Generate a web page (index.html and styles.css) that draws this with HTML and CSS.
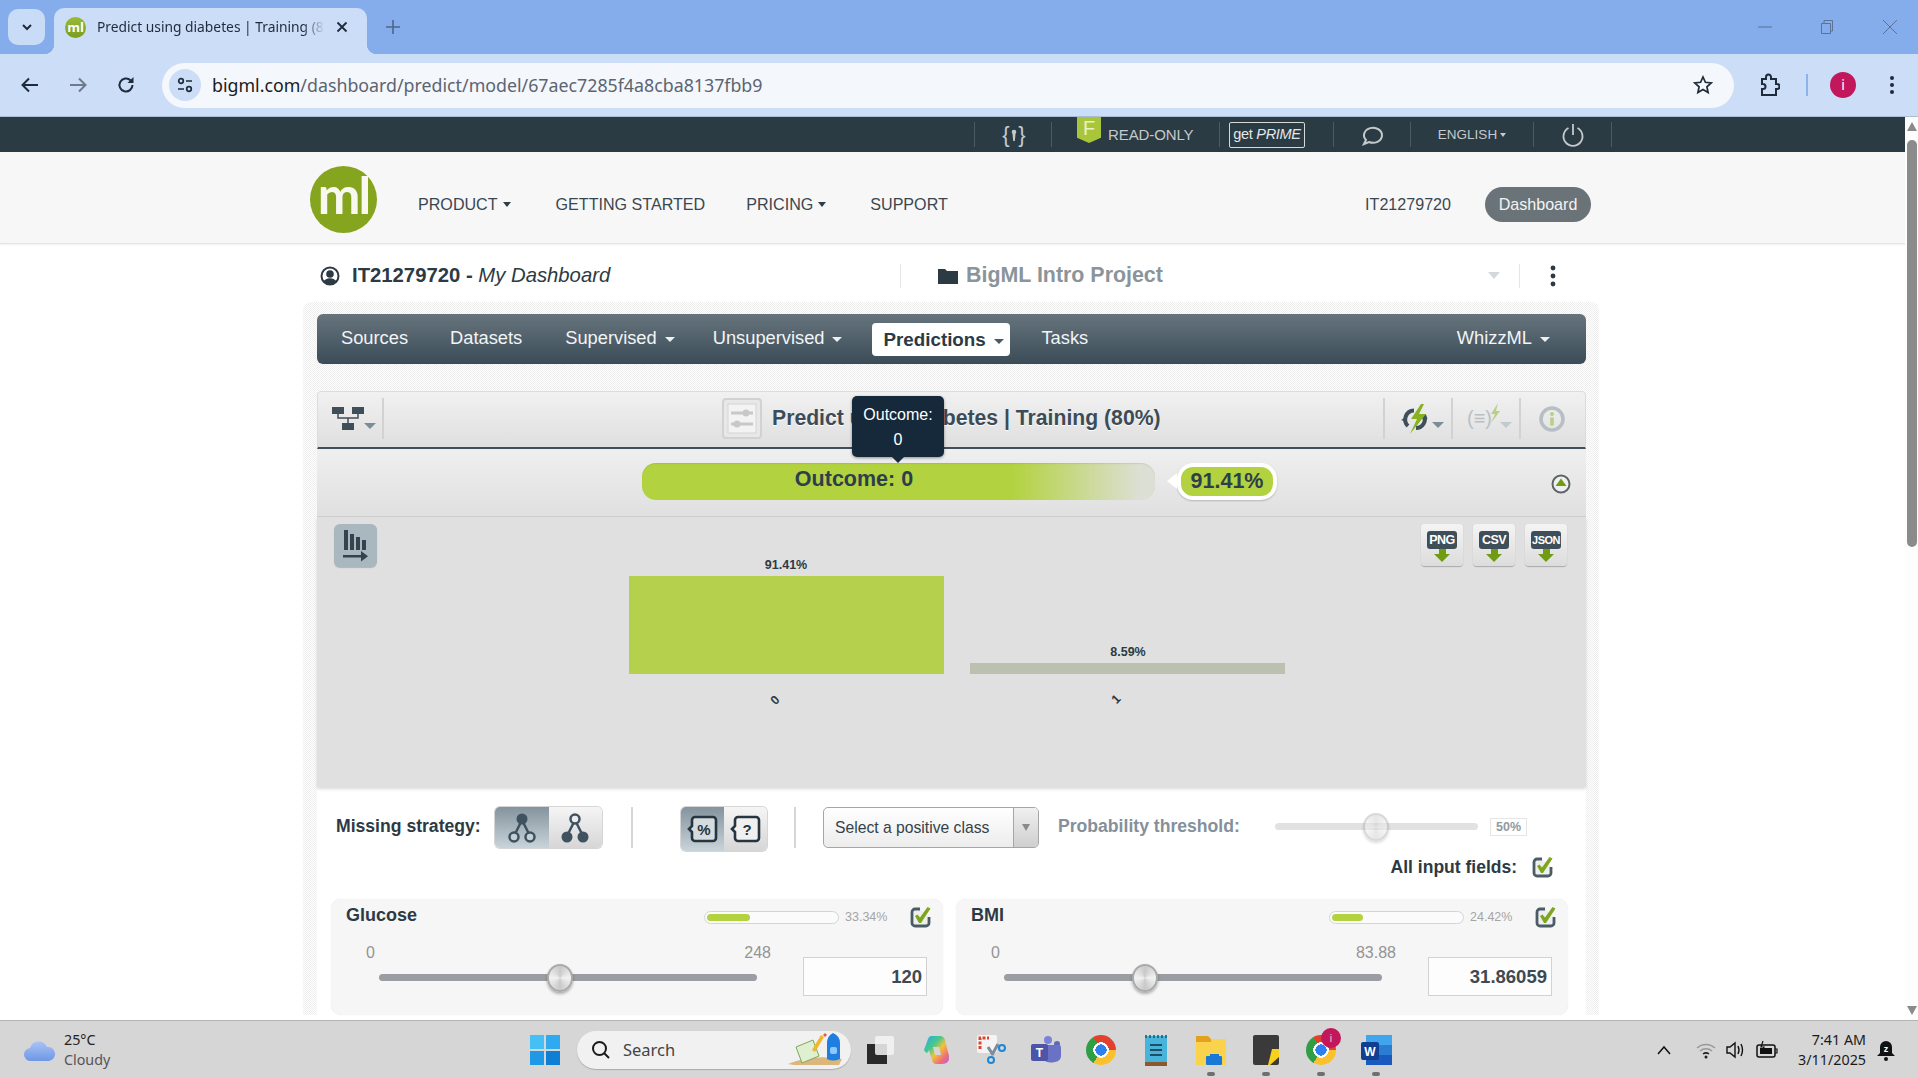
FILE: index.html
```html
<!DOCTYPE html>
<html lang="en">
<head>
<meta charset="utf-8">
<title>Predict using diabetes | Training (80%)</title>
<link rel="stylesheet" href="styles.css">
</head>
<body>
<svg class="sprite" aria-hidden="true">
  <symbol id="check" viewBox="0 0 22 22">
    <path d="M10 3H5a3 3 0 0 0-3 3v11a3 3 0 0 0 3 3h11a3 3 0 0 0 3-3v-6" fill="#eef0f0" stroke="#4c5c66" stroke-width="2.800"/>
    <path d="M5 10l2.500-1.500L10 11.500 17.500 1l3 1.500L11 17H9z" fill="#7ea51e"/>
  </symbol>
</svg>

<header class="tabstrip">
  <button class="tab-list" aria-label="Search tabs"><svg width="14" height="14" viewBox="0 0 14 14"><path d="M3 5l4 4 4-4" fill="none" stroke="#1f2a3a" stroke-width="2"/></svg></button>
  <div class="tab">
    <span class="favicon">ml</span>
    <span class="tab-title">Predict using diabetes | Training (8</span>
    <svg class="tab-close" width="14" height="14" viewBox="0 0 14 14"><path d="M2.500 2.500l9 9M11.500 2.500l-9 9" stroke="#1f2a3a" stroke-width="1.800"/></svg>
  </div>
  <svg class="tab-new" width="16" height="16" viewBox="0 0 16 16"><path d="M8 1v14M1 8h14" stroke="#4f6689" stroke-width="1.600"/></svg>
  <div class="window-ctl">
    <svg width="14" height="14" viewBox="0 0 14 14"><path d="M0 7h14" stroke="#5b7196" stroke-width="1"/></svg>
    <svg width="14" height="16" viewBox="0 0 14 16"><path d="M1.500 4.500h9v10h-9zM4 4V1.500h8.500V12H11" fill="none" stroke="#5b7196" stroke-width="1"/></svg>
    <svg width="16" height="16" viewBox="0 0 16 16"><path d="M1 1l14 14M15 1L1 15" stroke="#5b7196" stroke-width="1"/></svg>
  </div>
</header>

<div class="toolbar">
  <svg class="tb-icon" width="20" height="20" viewBox="0 0 20 20"><path d="M18 10H3M9 3.500L2.500 10 9 16.500" fill="none" stroke="#1f2a3a" stroke-width="2"/></svg>
  <svg class="tb-icon" width="20" height="20" viewBox="0 0 20 20"><path d="M2 10h15M11 3.500l6.500 6.500-6.500 6.500" fill="none" stroke="#6d7a8c" stroke-width="2"/></svg>
  <svg class="tb-icon" width="20" height="20" viewBox="0 0 20 20"><path d="M16.500 10a6.500 6.500 0 1 1-2-4.700L16.500 7" fill="none" stroke="#1f2a3a" stroke-width="2"/><path d="M17.500 2v6h-6z" fill="#1f2a3a"/></svg>
  <div class="omnibox">
    <span class="site-chip"><svg width="18" height="18" viewBox="0 0 18 18"><g fill="none" stroke="#1f2a3a" stroke-width="1.700"><circle cx="5" cy="5" r="2.300"/><circle cx="13" cy="13" r="2.300"/><path d="M10 5h6M2 13h6"/></g></svg></span>
    <span class="url"><b>bigml.com</b>/dashboard/predict/model/67aec7285f4a8cba8137fbb9</span>
    <svg class="star" width="20" height="20" viewBox="0 0 20 20"><path d="M10 2l2.400 5.300 5.800.6-4.300 3.900 1.200 5.700L10 14.600 4.900 17.500l1.200-5.700L1.800 7.900l5.800-.6z" fill="none" stroke="#1f2a3a" stroke-width="1.700"/></svg>
  </div>
  <svg class="tb-puzzle" width="22" height="24" viewBox="0 0 22 24"><path d="M4 6h4V4a2.500 2.500 0 0 1 5 0v2h5v5h1a2.500 2.500 0 0 1 0 5h-1v6H4v-6h1a2.500 2.500 0 0 0 0-5H4z" fill="none" stroke="#1f2a3a" stroke-width="2"/></svg>
  <span class="tb-sep"></span>
  <span class="avatar">i</span>
  <svg class="tb-kebab" width="6" height="20" viewBox="0 0 6 20"><circle cx="3" cy="3" r="2" fill="#1f2a3a"/><circle cx="3" cy="10" r="2" fill="#1f2a3a"/><circle cx="3" cy="17" r="2" fill="#1f2a3a"/></svg>
</div>

<div class="viewport">
  <main class="page">
    <div class="topbar">
      <div class="tb-seg seg-api">
        <svg width="30" height="24" viewBox="0 0 30 24"><text x="7" y="19" class="svg-brace">{</text><text x="23" y="19" class="svg-brace">}</text><circle cx="15" cy="9" r="2.300" fill="#c4c9cc"/><path d="M13.500 11h3l-.7 7h-1.600z" fill="#c4c9cc"/></svg>
      </div>
      <div class="tb-seg seg-plan">
        <span class="plan-tag">F</span>
        <span>READ-ONLY</span>
      </div>
      <div class="tb-seg seg-prime"><span class="prime">get <i>PRIME</i></span></div>
      <div class="tb-seg seg-chat">
        <svg width="26" height="24" viewBox="0 0 26 24"><path d="M5 21l2-4a9 7.500 0 1 1 3 2z" fill="none" stroke="#c4c9cc" stroke-width="2"/></svg>
      </div>
      <div class="tb-seg seg-lang">ENGLISH<span class="caret caret-sm"></span></div>
      <div class="tb-seg seg-power">
        <svg width="24" height="26" viewBox="0 0 24 26"><path d="M12 2v11M7.500 6a9.500 9.500 0 1 0 9 0" fill="none" stroke="#c4c9cc" stroke-width="1.800"/></svg>
      </div>
    </div>

    <nav class="site-nav">
      <span class="logo">ml</span>
      <a class="sn-product">PRODUCT<span class="caret caret-dark"></span></a>
      <a class="sn-start">GETTING STARTED</a>
      <a class="sn-pricing">PRICING<span class="caret caret-dark"></span></a>
      <a class="sn-support">SUPPORT</a>
      <a class="sn-user">IT21279720</a>
      <a class="dash-pill">Dashboard</a>
    </nav>

    <div class="crumbs">
      <svg class="crumb-user" width="20" height="22" viewBox="0 0 20 22"><circle cx="10" cy="11" r="8.500" fill="none" stroke="#2c3a44" stroke-width="2"/><circle cx="10" cy="9" r="3.800" fill="#2c3a44"/><path d="M3.500 17a7 6 0 0 1 13 0l-3 2.500h-7z" fill="#2c3a44"/></svg>
      <span class="crumb-text"><b>IT21279720</b> <b>-</b> <i>My Dashboard</i></span>
      <span class="crumb-sep"></span>
      <svg class="crumb-folder" width="20" height="16" viewBox="0 0 20 16"><path d="M0 1h7l2 2h11v13H0z" fill="#2c3a44"/></svg>
      <span class="crumb-project">BigML Intro Project</span>
      <span class="crumb-drop"></span>
      <span class="crumb-sep2"></span>
      <svg class="crumb-kebab" width="6" height="22" viewBox="0 0 6 22"><circle cx="3" cy="3" r="2.400" fill="#2c3a44"/><circle cx="3" cy="11" r="2.400" fill="#2c3a44"/><circle cx="3" cy="19" r="2.400" fill="#2c3a44"/></svg>
    </div>

    <div class="shell">
      <nav class="app-nav">
        <a class="an-sources">Sources</a>
        <a class="an-datasets">Datasets</a>
        <a class="an-sup">Supervised<span class="caret caret-light"></span></a>
        <a class="an-unsup">Unsupervised<span class="caret caret-light"></span></a>
        <a class="an-pred">Predictions<span class="caret caret-mid"></span></a>
        <a class="an-tasks">Tasks</a>
        <a class="an-whizz">WhizzML<span class="caret caret-light"></span></a>
      </nav>

      <section class="panel">
        <div class="title-row">
          <div class="title-left">
            <svg width="32" height="26" viewBox="0 0 32 26"><g fill="#3f4f5a"><rect x="0" y="0" width="12" height="7"/><rect x="20" y="0" width="12" height="7"/><rect x="10" y="16" width="12" height="7"/></g><path d="M6 7v4h20V7M16 11v5" fill="none" stroke="#3f4f5a" stroke-width="1.500"/></svg>
            <span class="caret caret-gray"></span>
          </div>
          <div class="title-center">
            <svg class="title-icon" width="40" height="41" viewBox="0 0 40 41"><rect x="1" y="1" width="38" height="39" rx="3" fill="#e8e8e8" stroke="#d2d2d2" stroke-width="2"/><rect x="6" y="6" width="28" height="29" fill="#f3f3f3" stroke="#d4d4d4"/><path d="M9 15h22M9 26h22" stroke="#c8c8c8" stroke-width="3"/><circle cx="24" cy="15" r="3.500" fill="#c8c8c8"/><circle cx="15" cy="26" r="3.500" fill="#c8c8c8"/></svg>
            <h1 class="title-text">Predict using diabetes | Training (80%)</h1>
          </div>
          <div class="title-right">
            <div class="tr-cell tr-a">
              <svg width="32" height="30" viewBox="0 0 32 30"><path d="M15 6.500a9 9 0 0 0-6 15.500M17 24a9 9 0 0 0 8-13" fill="none" stroke="#3f4f5a" stroke-width="4"/><path d="M7 13l-5 3 6 2zM24 17l5-3-6-1z" fill="#3f4f5a"/><path d="M22 0L12 15h6l-7 15 16-20h-7l5-10z" fill="#86b21f"/></svg>
              <span class="caret caret-gray"></span>
            </div>
            <div class="tr-cell tr-b">
              <span class="formula">(≡)</span>
              <svg class="mini-bolt" width="12" height="20" viewBox="0 0 12 20"><path d="M9 0L2 11h4l-4 9 9-12H7z" fill="#b9cf86"/></svg>
              <span class="caret caret-pale"></span>
            </div>
            <div class="tr-cell tr-c">
              <svg width="26" height="26" viewBox="0 0 26 26"><circle cx="13" cy="13" r="11" fill="none" stroke="#b6bfc3" stroke-width="3.500"/><circle cx="13" cy="8" r="2" fill="#b9cf86"/><rect x="11.200" y="11.500" width="3.600" height="8" fill="#b9cf86"/></svg>
            </div>
          </div>
        </div>

        <div class="tip">Outcome:<br>0</div>

        <div class="result-row">
          <div class="result-bar">Outcome: 0</div>
          <div class="result-badge">91.41%</div>
          <svg class="collapse" width="20" height="20" viewBox="0 0 20 20"><circle cx="10" cy="10" r="8.500" fill="#f0f0f0" stroke="#5c6468" stroke-width="2"/><path d="M10 4.500l5.500 7.500h-11z" fill="#6f9c12"/></svg>
        </div>

        <div class="chart">
          <svg class="chart-svg" width="1269" height="270" viewBox="0 0 1269 270">
            <rect x="312" y="59" width="315" height="98" fill="#b5d04c"/>
            <rect x="653" y="146" width="315" height="11" fill="#bcc0b0"/>
            <text class="bar-label" x="469" y="52">91.41%</text>
            <text class="bar-label" x="811" y="139">8.59%</text>
            <text class="axis-label" transform="translate(461 186) rotate(-45)">0</text>
            <text class="axis-label" transform="translate(802 185) rotate(-45)">1</text>
          </svg>
          <div class="chart-tools">
            <button class="sort-btn" aria-label="Sort">
              <svg width="26" height="32" viewBox="0 0 26 32"><g fill="#34444f"><rect x="1" y="0" width="4" height="20"/><rect x="7" y="4" width="4" height="16"/><rect x="13" y="7" width="4" height="13"/><rect x="19" y="10" width="4" height="10"/><rect x="0" y="25" width="20" height="2.500"/><path d="M18 21l7 5.250-7 5.250z"/></g></svg>
            </button>
            <div class="exports">
              <button class="export"><span class="ex-name">PNG</span><span class="ex-arrow"></span></button>
              <button class="export"><span class="ex-name">CSV</span><span class="ex-arrow"></span></button>
              <button class="export"><span class="ex-name ex-small">JSON</span><span class="ex-arrow"></span></button>
            </div>
          </div>
        </div>

        <div class="controls">
          <div class="ctl-row">
            <span class="ctl-label">Missing strategy:</span>
            <div class="seg">
              <span class="seg-btn seg-on"><svg width="30" height="32" viewBox="0 0 30 32"><path d="M15 8L7 24M15 8l8 16" stroke="#3f5260" stroke-width="2.500"/><circle cx="15" cy="7" r="5.500" fill="#3f5260"/><circle cx="7" cy="25" r="4.500" fill="#c4d0d6" stroke="#3f5260" stroke-width="2.500"/><circle cx="23" cy="25" r="4.500" fill="#c4d0d6" stroke="#3f5260" stroke-width="2.500"/></svg></span>
              <span class="seg-btn"><svg width="30" height="32" viewBox="0 0 30 32"><path d="M15 8L7 24M15 8l8 16" stroke="#3f5260" stroke-width="2.500"/><circle cx="15" cy="7" r="4.500" fill="#ececec" stroke="#3f5260" stroke-width="2.500"/><circle cx="7" cy="25" r="5.500" fill="#3f5260"/><circle cx="23" cy="25" r="5.500" fill="#3f5260"/></svg></span>
            </div>
            <span class="ctl-sep sep-a"></span>
            <div class="seg seg-tall">
              <span class="seg-btn seg-on seg-narrow">
                <svg width="32" height="30" viewBox="0 0 32 30"><path d="M8 3h18a3 3 0 0 1 3 3v18a3 3 0 0 1-3 3H8a3 3 0 0 1-3-3v-6l-3-3 3-3V6a3 3 0 0 1 3-3z" fill="#d4dcdf" stroke="#26353f" stroke-width="2.600"/><text x="17" y="20.500" class="svg-sym">%</text></svg>
              </span>
              <span class="seg-btn seg-narrow">
                <svg width="32" height="30" viewBox="0 0 32 30"><path d="M8 3h18a3 3 0 0 1 3 3v18a3 3 0 0 1-3 3H8a3 3 0 0 1-3-3v-6l-3-3 3-3V6a3 3 0 0 1 3-3z" fill="#f0f0f0" stroke="#26353f" stroke-width="2.600"/><text x="17" y="20.500" class="svg-sym">?</text></svg>
              </span>
            </div>
            <span class="ctl-sep sep-b"></span>
            <div class="select"><span class="select-text">Select a positive class</span><span class="select-arrow"></span></div>
            <span class="ctl-label prob-label">Probability threshold:</span>
            <div class="prob-track"><span class="slider-knob knob-faded" style="left:49.800%"></span></div>
            <span class="prob-val">50%</span>
          </div>
          <div class="all-row">
            <span class="all-label">All input fields:</span>
            <svg width="22" height="22"><use href="#check"/></svg>
          </div>
        </div>

        <div class="cards">
          <article class="card">
            <div class="card-head">
              <span class="card-name">Glucose</span>
              <span class="imp"><span class="imp-fill" style="width:33%"></span></span>
              <span class="imp-val">33.34%</span>
              <svg width="22" height="22"><use href="#check"/></svg>
            </div>
            <div class="card-body">
              <div class="range">
                <div class="scale"><span>0</span><span>248</span></div>
                <div class="track"><span class="slider-knob" style="left:47.900%"></span></div>
              </div>
              <div class="val-box">120</div>
            </div>
          </article>
          <article class="card">
            <div class="card-head">
              <span class="card-name">BMI</span>
              <span class="imp"><span class="imp-fill" style="width:24%"></span></span>
              <span class="imp-val">24.42%</span>
              <svg width="22" height="22"><use href="#check"/></svg>
            </div>
            <div class="card-body">
              <div class="range">
                <div class="scale"><span>0</span><span>83.88</span></div>
                <div class="track"><span class="slider-knob" style="left:37.300%"></span></div>
              </div>
              <div class="val-box">31.86059</div>
            </div>
          </article>
        </div>
      </section>
    </div>
  </main>
  <aside class="scrollbar">
    <span class="sb-up"></span>
    <span class="sb-thumb"></span>
    <span class="sb-down"></span>
  </aside>
</div>

<footer class="taskbar">
  <div class="weather">
    <svg width="32" height="24" viewBox="0 0 32 24"><defs><linearGradient id="cl" x1="0" y1="0" x2="0" y2="1"><stop offset="0" stop-color="#a9c4f5"/><stop offset="1" stop-color="#6f97e6"/></linearGradient></defs><path d="M7 23a6.500 6.500 0 0 1-1-13 9 9 0 0 1 17-1 7 7 0 0 1 2 14z" fill="url(#cl)"/></svg>
    <div class="weather-text"><span class="w-temp">25°C</span><span class="w-desc">Cloudy</span></div>
  </div>
  <svg class="win-logo" width="30" height="30" viewBox="0 0 30 30"><rect x="0" y="0" width="14" height="14" fill="#45c0f5"/><rect x="16" y="0" width="14" height="14" fill="#2fa9ef"/><rect x="0" y="16" width="14" height="14" fill="#1f98e6"/><rect x="16" y="16" width="14" height="14" fill="#0f7fd6"/></svg>
  <div class="search">
    <svg width="20" height="20" viewBox="0 0 20 20"><circle cx="8.500" cy="8.500" r="6.500" fill="none" stroke="#1a1a1a" stroke-width="2"/><path d="M13 13l5 5" stroke="#1a1a1a" stroke-width="2"/></svg>
    <span class="search-text">Search</span>
    <svg class="search-art" width="60" height="36" viewBox="0 0 60 36"><path d="M2 32q24-10 54-5l-3 6H8z" fill="#dcb77d"/><path d="M10 15l17-7 6 16-17 7z" fill="#dff0d0" stroke="#7da85a"/><path d="M26 18l9-15 3 2-9 15z" fill="#f1b72c"/><path d="M37 3l2-2 2 2-2 2z" fill="#e45a4a"/><path d="M41 27V11q0-7 6-10 7 3 7 10v16q-7 3-13 0z" fill="#1e7fe0"/><rect x="44" y="15" width="7" height="7" rx="2" fill="#8cc8ff"/></svg>
  </div>
  <div class="apps">
    <span class="app"><svg width="28" height="30" viewBox="0 0 28 30"><rect x="0" y="9" width="20" height="20" fill="#2a2a2a"/><rect x="8" y="1" width="19" height="19" rx="2" fill="#f4f4f4" fill-opacity=".85"/></svg></span>
    <span class="app"><svg width="28" height="30" viewBox="0 0 28 30"><defs><linearGradient id="cp" x1="0" y1="0" x2="1" y2="1"><stop offset="0" stop-color="#2aa7e8"/><stop offset=".35" stop-color="#49c98a"/><stop offset=".55" stop-color="#f2c23c"/><stop offset=".8" stop-color="#ef6a7a"/><stop offset="1" stop-color="#a86be8"/></linearGradient></defs><path d="M9 1h9q4 0 5 4l4 16q1 8-7 8h-6q-3 0-4-4L7 15q-2 6-5 0L6 4q1-3 3-3z" fill="url(#cp)"/><path d="M11 12h6l2 8h-6z" fill="#d6d6d6"/></svg></span>
    <span class="app"><svg width="30" height="32" viewBox="0 0 30 32"><rect x="1" y="1" width="20" height="18" rx="2" fill="#f4f4f4"/><path d="M4 15V4h9" fill="none" stroke="#d9452f" stroke-width="3" stroke-dasharray="3 1.500"/><path d="M12 13l5 8M22 10l-6 11" stroke="#7f8c99" stroke-width="3"/><circle cx="15" cy="26" r="3" fill="none" stroke="#1c86d8" stroke-width="2"/><circle cx="26" cy="14" r="3" fill="none" stroke="#1c86d8" stroke-width="2"/></svg></span>
    <span class="app"><svg width="32" height="30" viewBox="0 0 32 30"><circle cx="18" cy="5" r="4" fill="#7b83d6"/><circle cx="27" cy="9" r="3" fill="#5f68b8"/><path d="M12 10h17q2 0 2 3v8q0 5-6 6-8 2-12-3z" fill="#6a72c6"/><rect x="1" y="9" width="17" height="17" rx="2" fill="#4c55a8"/><text x="9.500" y="22" class="svg-t">T</text></svg></span>
    <span class="app"><span class="chrome"></span></span>
    <span class="app"><svg width="24" height="32" viewBox="0 0 24 32"><rect x="1" y="2" width="22" height="28" rx="2" fill="#47b4dc"/><rect x="1" y="28" width="22" height="4" fill="#8a5a2e"/><path d="M2 1v3M6 1v3M10 1v3M14 1v3M18 1v3M22 1v3" stroke="#1e4f66" stroke-width="1.500"/><path d="M6 11h12M6 16h12M6 21h12" stroke="#1e4f66" stroke-width="2"/></svg></span>
    <span class="app has-dot"><svg width="32" height="30" viewBox="0 0 32 30"><path d="M1 1h12l3 3h15v26H1z" fill="#fbd24b"/><path d="M1 1h12l3 3v3H1z" fill="#e2a21f"/><rect x="11" y="21" width="16" height="9" rx="1" fill="#1a78d6"/><rect x="15" y="19" width="9" height="3" fill="#1a78d6"/></svg></span>
    <span class="app has-dot"><svg width="28" height="32" viewBox="0 0 28 32"><rect x="1" y="1" width="26" height="30" rx="2" fill="#3a3a3a"/><path d="M27 15v8l-9 8h-2l4-16z" fill="#f6d21f"/></svg></span>
    <span class="app has-dot"><span class="chrome"></span><span class="app-badge">i</span></span>
    <span class="app has-dot"><svg width="32" height="32" viewBox="0 0 32 32"><rect x="6" y="1" width="26" height="10" fill="#41a5ee"/><rect x="6" y="11" width="26" height="10" fill="#2b7cd3"/><rect x="6" y="21" width="26" height="10" fill="#185abd"/><rect x="1" y="8" width="18" height="18" rx="2" fill="#103f91"/><text x="10" y="22" class="svg-t">W</text></svg></span>
  </div>
  <div class="tray">
    <svg width="14" height="10" viewBox="0 0 14 10"><path d="M1 9l6-7 6 7" fill="none" stroke="#111" stroke-width="1.500"/></svg>
    <svg class="tray-wifi" width="20" height="20" viewBox="0 0 20 20"><g fill="none" stroke-width="1.500"><path d="M1 8a13 13 0 0 1 18 0" stroke="#999"/><path d="M4 11a9 9 0 0 1 12 0" stroke="#999"/><path d="M7 14a5 5 0 0 1 6 0" stroke="#222"/></g><circle cx="10" cy="17" r="1.500" fill="#222"/></svg>
    <svg class="tray-vol" width="22" height="20" viewBox="0 0 22 20"><path d="M2 7h3l5-4v14l-5-4H2z" fill="none" stroke="#111" stroke-width="1.400"/><path d="M13 6q2 4 0 8M16 4q3 6 0 12" fill="none" stroke="#111" stroke-width="1.400"/></svg>
    <svg class="tray-bat" width="22" height="20" viewBox="0 0 22 20"><rect x="1" y="5" width="18" height="12" rx="2" fill="none" stroke="#111" stroke-width="1.500"/><rect x="4" y="8" width="12" height="6" fill="#111"/><path d="M19 9h2v4h-2M7 1l-2 6h3l-1 3" fill="none" stroke="#111" stroke-width="1.200"/></svg>
    <div class="clock"><span>7:41 AM</span><span>3/11/2025</span></div>
    <svg class="tray-bell" width="20" height="24" viewBox="0 0 20 24"><path d="M10 3a6 6 0 0 0-6 6v6l-3 3h18l-3-3V9a6 6 0 0 0-6-6z" fill="#111"/><circle cx="10" cy="21" r="2" fill="#111"/><text x="10" y="14" class="svg-z">z</text></svg>
  </div>
</footer>
</body>
</html>
```

FILE: styles.css
```css
* { box-sizing: border-box; }
html, body { margin: 0; height: 100%; overflow: hidden; }
body {
  width: 1918px;
  height: 1078px;
  display: flex;
  flex-direction: column;
  font-family: "Liberation Sans", Arial, sans-serif;
  background: #fff;
}
a { color: inherit; text-decoration: none; }
button { font: inherit; padding: 0; border: 0; background: none; }
svg { flex: none; display: block; }
.sprite { position: absolute; width: 0; height: 0; }

/* browser chrome */
.tabstrip {
  height: 54px;
  flex: none;
  background: #86adeb;
  display: flex;
  align-items: flex-start;
  position: relative;
}
.tab-list {
  width: 37px; height: 36px;
  margin: 9px 0 0 8px;
  border-radius: 10px;
  background: #c9dcf7;
  display: flex; align-items: center; justify-content: center;
}
.tab {
  width: 313px; height: 46px;
  margin: 8px 0 0 9px;
  background: #cbddf7;
  border-radius: 10px 10px 0 0;
  display: flex; align-items: center;
  padding: 0 15px 8px 11px;
  position: relative;
}
.tab::before, .tab::after {
  content: "";
  position: absolute;
  bottom: 0;
  width: 10px; height: 10px;
}
.tab::before { left: -10px; background: radial-gradient(circle at 0 0, #86adeb 10px, #cbddf7 10.5px); }
.tab::after { right: -10px; background: radial-gradient(circle at 100% 0, #86adeb 10px, #cbddf7 10.5px); }
.favicon {
  width: 21px; height: 21px; border-radius: 50%;
  background: linear-gradient(#9abb3a, #7c9c1b);
  color: #fff; font: 700 13px/20px "Open Sans", sans-serif;
  text-align: center; flex: none;
}
.tab-title {
  flex: none; width: 228px; margin-left: 11px;
  font: 13.800px/20px "Noto Sans", sans-serif;
  color: #1f2a3a; white-space: nowrap; overflow: hidden;
  -webkit-mask-image: linear-gradient(90deg, #000 90%, transparent 100%);
  mask-image: linear-gradient(90deg, #000 90%, transparent 100%);
}
.tab-close { margin-left: 10px; }
.tab-new { margin: 19px 0 0 18px; }
.window-ctl {
  margin-left: auto;
  padding: 19px 20px 0 0;
  display: flex; gap: 48px; align-items: center;
}
.toolbar {
  height: 63px; flex: none;
  background: #cbddf7;
  border-bottom: 1px solid #a9bcd8;
  display: flex; align-items: center;
  padding: 0 0 0 20px;
}
.tb-icon { margin-right: 28px; }
.tb-icon:nth-of-type(3) { margin-right: 26px; }
.omnibox {
  width: 1572px; height: 45px; margin-left: 0;
  background: #f4f7fc;
  border-radius: 23px;
  display: flex; align-items: center;
  padding: 0 21px 0 7px;
}
.site-chip {
  width: 32px; height: 32px; border-radius: 50%;
  background: #cbddf7;
  display: flex; align-items: center; justify-content: center;
}
.url {
  margin-left: 11px;
  font: 17.800px/24px "Noto Sans", sans-serif;
  color: #5c6470;
}
.url b { font-weight: 400; color: #1a1a1a; }
.star { margin-left: auto; }
.tb-puzzle { margin-left: 24px; }
.tb-sep { width: 2px; height: 22px; background: #8eb3ea; margin-left: 26px; }
.avatar {
  width: 26px; height: 26px; border-radius: 50%;
  background: #c2185b; color: #fff;
  font: 14px/26px "Noto Sans", sans-serif; text-align: center;
  margin-left: 22px;
}
.tb-kebab { margin-left: 33px; }

/* page viewport */
.viewport { height: 903px; flex: none; display: flex; }
.page { width: 1905px; flex: none; overflow: hidden; background: #fff; }
.scrollbar {
  width: 13px; flex: none; background: #fdfdfd;
  display: flex; flex-direction: column; align-items: center;
}
.sb-up, .sb-down { width: 0; height: 0; border: 5.500px solid transparent; }
.sb-up { border-bottom: 9px solid #8a8a8a; border-top: 0; margin-top: 5px; }
.sb-thumb { width: 10px; height: 407px; margin-top: 9px; border-radius: 5px; background: #8b8b8b; }
.sb-down { border-top: 9px solid #8a8a8a; border-bottom: 0; margin-top: auto; margin-bottom: 5px; }

/* carets */
.caret { display: inline-block; width: 0; height: 0; border-style: solid; border-color: currentColor transparent transparent; }
.caret-dark { border-width: 5px 4.500px 0; margin-left: 5px; vertical-align: 3px; color: #2f3d47; }
.caret-sm { border-width: 4px 3.500px 0; margin-left: 3px; vertical-align: 2px; color: #c4c9cc; }
.caret-light { border-width: 5px 5.500px 0; margin-left: 8px; vertical-align: 2px; color: #f0f0f0; }
.caret-mid { border-width: 5px 5.500px 0; margin-left: 8px; vertical-align: 2px; color: #4a5a64; }
.caret-gray { border-width: 6px 6px 0; color: #7b8d97; }
.caret-pale { border-width: 6px 6px 0; color: #c3cacd; }

/* dark top bar */
.topbar {
  height: 35px;
  background: #2b3b44;
  display: flex;
  justify-content: flex-end;
  padding: 5px 293px 5px 0;
  color: #c4c9cc;
  font-size: 15px;
}
.tb-seg {
  border-right: 1px solid #4b5a63;
  display: flex; align-items: center; justify-content: center;
  height: 25px;
}
.seg-api { width: 78px; border-left: 1px solid #4b5a63; padding-left: 2px; }
.seg-plan { width: 168px; justify-content: flex-start; padding-left: 25px; gap: 7px; letter-spacing: -.1px; }
.plan-tag {
  width: 24px; height: 26px; margin-top: -5px; margin-bottom: 4px;
  background: #a9c63a; color: #e9f1c8;
  font-size: 20px; line-height: 22px; text-align: center;
  clip-path: polygon(0 0, 100% 0, 100% 80%, 50% 100%, 0 80%);
  align-self: flex-start;
}
.seg-prime { width: 114px; justify-content: flex-start; padding-left: 9px; }
.prime {
  display: block; width: 76px; height: 26px;
  border: 1px solid #d5d9db; border-radius: 2px;
  color: #e4e7e8; font-size: 14.500px; line-height: 23px; text-align: center;
  white-space: nowrap; letter-spacing: -.3px;
}
.seg-chat { width: 77px; }
.seg-lang { width: 123px; font-size: 13.500px; }
.seg-power { width: 78px; }
.svg-brace { font: 22px "Liberation Sans", sans-serif; fill: #c4c9cc; text-anchor: middle; }

/* site nav */
.site-nav {
  height: 92px;
  background: #f7f7f7;
  border-bottom: 1px solid #e3e3e3;
  box-shadow: 0 1px 2px rgba(0,0,0,.06);
  display: flex; align-items: center;
  padding: 0 0 0 310px;
  color: #3a4750;
  font-size: 16.100px;
}
.site-nav a { margin-top: 13px; }
.logo {
  width: 67px; height: 67px; border-radius: 50%;
  margin-top: 3px;
  background: #86a51f; color: #f8f8f0;
  font: 700 51px/58px "Lato", sans-serif;
  text-align: center; letter-spacing: -2px;
  flex: none;
}
.sn-product { margin-left: 41px; }
.sn-start { margin-left: 45px; }
.sn-pricing { margin-left: 41px; }
.sn-support { margin-left: 44px; }
.sn-user { margin-left: auto; }
.dash-pill {
  width: 106px; height: 35px; margin: 13px 314px 0 34px;
  border-radius: 18px;
  background: #6a7378; color: #f4f4f4;
  text-align: center; line-height: 35px;
  font-size: 16.100px;
}

/* breadcrumb */
.crumbs {
  height: 58px;
  display: flex; align-items: center;
  padding: 5px 0 0 320px;
  color: #2c3a44;
}
.crumb-text { margin-left: 12px; font-size: 20.300px; width: 548px; white-space: nowrap; }
.crumb-sep { width: 1px; height: 24px; background: #e6e6e6; }
.crumb-folder { margin-left: 37px; }
.crumb-project { margin-left: 8px; font-weight: 700; font-size: 21.400px; color: #8a9499; width: 522px; white-space: nowrap; }
.crumb-drop { width: 0; height: 0; border-style: solid; border-width: 7px 6.500px 0; border-color: #d4d8da transparent transparent; }
.crumb-sep2 { width: 1px; height: 24px; background: #e6e6e6; margin-left: 19px; }
.crumb-kebab { margin-left: 30px; }

/* dotted shell */
.shell {
  width: 1296px;
  margin-left: 303px;
  padding: 12px 13px 0 14px;
  border-radius: 8px 8px 0 0;
  background: repeating-conic-gradient(#eeeeee 0 25%, #fff 0 50%) 0 0 / 2px 2px;
}
.app-nav {
  height: 50px;
  border-radius: 6px;
  background: linear-gradient(#66747c, #3b4c58);
  display: flex; align-items: center;
  color: #f2f4f5;
  font-size: 18.300px;
}
.app-nav a:not(.an-pred) { margin-top: -2px; }
.an-sources { margin-left: 24px; }
.an-datasets { margin-left: 42px; }
.an-sup { margin-left: 43px; }
.an-unsup { margin-left: 38px; }
.an-pred {
  margin-left: 30px;
  width: 138px; height: 33px;
  background: #fff; border-radius: 4px;
  color: #2c3a44; font-weight: 700; font-size: 18.800px;
  line-height: 33px; padding-left: 11px;
  white-space: nowrap;
}
.an-tasks { margin-left: 31px; }
.an-whizz { margin-left: auto; margin-right: 36px; }

/* panel */
.panel {
  margin-top: 27px;
  background: #fff;
  position: relative;
}
.title-row {
  height: 58px;
  background: linear-gradient(#f1f1f1, #dfdfdf);
  border: 1px solid #dcdcdc;
  border-bottom: 2.500px solid #3f4f5a;
  border-radius: 4px 4px 0 0;
  display: flex; align-items: center;
  padding-bottom: 2px;
}
.title-left {
  width: 66px; height: 41px;
  border-right: 2px solid #d2d2d2;
  display: flex; align-items: center;
  padding: 2px 0 0 14px;
}
.title-left .caret { margin-top: 12px; }
.title-center {
  flex: 1;
  display: flex; align-items: center;
  padding-left: 338px;
}
.title-icon { margin-right: 10px; }
.title-text {
  margin: -1px 0 0;
  font-size: 21.200px; font-weight: 700;
  color: #3b4c58;
  white-space: nowrap;
  text-shadow: 0 1px 0 #fff;
}
.title-right { display: flex; }
.tr-cell {
  width: 68px; height: 41px;
  border-left: 2px solid #d2d2d2;
  display: flex; align-items: center;
  padding-left: 16px;
}
.tr-a { padding-left: 14px; }
.tr-a .caret { margin: 12px 0 0 1px; }
.tr-b { padding-left: 14px; }
.formula { font-size: 20px; color: #b9c1c5; }
.mini-bolt { margin: -12px 0 0 -3px; }
.tr-b .caret { margin: 12px 0 0 -1px; }
.tr-c { padding-left: 18px; width: 66px; }

.tip {
  position: absolute;
  left: 535px; top: 5px;
  width: 92px; height: 61px;
  border-radius: 5px;
  background: #16293b;
  color: #fff;
  font-size: 16px; line-height: 25px;
  text-align: center;
  padding-top: 6px;
  box-shadow: 0 1px 3px rgba(0,0,0,.4);
  z-index: 3;
}
.tip::after {
  content: "";
  position: absolute;
  left: 40px; top: 100%;
  border: 6px solid transparent;
  border-top-color: #16293b;
  border-bottom: 0;
}

.result-row {
  height: 68px;
  background: linear-gradient(#efefef, #e0e0e0);
  border-bottom: 1px solid #cfcfcf;
  display: flex; align-items: center;
  padding: 0 15px 3px 325px;
}
.result-bar {
  width: 513px; height: 37px;
  border-radius: 14px;
  background: linear-gradient(90deg, #b3d23f 72%, #dcdfd4 97%);
  color: #2d3e4c;
  font-size: 21.500px; font-weight: 700;
  line-height: 33px; text-align: center;
  padding-right: 89px;
  box-shadow: inset 0 1px 1px rgba(0,0,0,.08);
}
.result-badge {
  margin: 1px 0 0 22px;
  width: 100px; height: 37px;
  border: 4px solid #fff;
  border-radius: 16px;
  background: #b3d23f;
  color: #2d3e4c;
  font-size: 21.500px; font-weight: 700;
  line-height: 29px;
  text-align: center;
  box-shadow: 0 1px 2px rgba(0,0,0,.2);
  position: relative;
}
.result-badge::before {
  content: "";
  position: absolute;
  left: -14px; top: 6px;
  border: 8px solid transparent;
  border-right: 10px solid #fff;
  border-left: 0;
}
.collapse { margin: 5px 0 0 auto; }

.chart {
  height: 270px;
  background: #e0e0e0;
  position: relative;
  box-shadow: 0 2px 3px rgba(0,0,0,.15);
}
.bar-label { font-size: 12.500px; font-weight: 700; fill: #2c3a44; text-anchor: middle; }
.axis-label { font-size: 12.500px; font-weight: 700; fill: #2c3a44; text-anchor: middle; }
.chart-tools {
  position: absolute; left: 17px; right: 19px; top: 7px;
  display: flex; justify-content: space-between;
}
.sort-btn {
  width: 43px; height: 43px;
  border-radius: 6px;
  background: #a9b7be;
  display: flex; align-items: center; justify-content: center;
  box-shadow: 0 1px 1px rgba(0,0,0,.2);
}
.exports { display: flex; gap: 10px; }
.export {
  width: 42px; height: 42px;
  border-radius: 4px;
  background: linear-gradient(#f4f4f4, #dcdcdc);
  box-shadow: 0 1px 1px rgba(0,0,0,.25);
  display: flex; flex-direction: column; align-items: center;
  padding-top: 7px;
}
.ex-name {
  display: block;
  width: 30px; height: 18px;
  border-radius: 3px;
  background: #3f4f5a; color: #fff;
  font-size: 12.500px; font-weight: 700; line-height: 18px;
  letter-spacing: -.5px;
  text-align: center;
  white-space: nowrap;
}
.ex-small { font-size: 11px; }
.ex-arrow {
  width: 0; height: 0; position: relative;
  border: 8px solid transparent; border-top: 8px solid #6f9c12; border-bottom: 0;
  margin-top: 5px;
}
.ex-arrow::before {
  content: ""; position: absolute; left: -3.500px; top: -13px;
  width: 7px; height: 6px; background: #6f9c12;
}

/* controls */
.controls { padding: 20px 32px 0 19px; }
.ctl-row { display: flex; align-items: flex-start; height: 44px; }
.ctl-label {
  flex: none; width: 159px;
  font-size: 17.600px; font-weight: 700; color: #2c3a44;
  line-height: 38px; white-space: nowrap;
}
.seg { display: flex; height: 41px; border-radius: 5px; box-shadow: 0 0 0 1px #d5d5d5; overflow: hidden; }
.seg-tall { height: 44px; margin-left: 0; }
.seg-btn {
  width: 53.500px; height: 100%;
  background: linear-gradient(#f5f5f5, #d6d6d6);
  display: flex; align-items: center; justify-content: center;
}
.seg-on { background: linear-gradient(#84939c, #c8d4da); }
.seg-narrow { width: 43px; }
.svg-sym { font: 700 15px "Liberation Sans", sans-serif; fill: #26353f; text-anchor: middle; }
.ctl-sep { width: 2px; height: 41px; background: #d6d6d6; flex: none; }
.sep-a { margin: 0 48px 0 29px; }
.sep-b { margin: 0 27px 0 27px; }
.select {
  width: 216px; height: 41px;
  border: 1px solid #a6a6a6; border-radius: 5px;
  background: linear-gradient(#fff, #ececec);
  display: flex;
  color: #33414a; font-size: 15.700px; line-height: 39px;
  flex: none;
}
.select-text { flex: 1; padding-left: 11px; white-space: nowrap; }
.select-arrow {
  width: 25px; position: relative;
  border-left: 1px solid #a6a6a6;
  background: linear-gradient(#f0f0f0, #cfcfcf);
  border-radius: 0 4px 4px 0;
}
.select-arrow::after {
  content: ""; position: absolute; left: 8px; top: 16px;
  border: 4px solid transparent; border-top: 7px solid #8a8a8a; border-bottom: 0;
}
.prob-label { width: 217px; margin-left: 19px; color: #85909a; }
.prob-track {
  width: 203px; height: 7px; margin-top: 16px;
  border-radius: 4px; background: #e2e2e2;
  position: relative; flex: none;
}
.prob-val {
  width: 37px; height: 18px; margin: 11px 0 0 12px;
  border: 1px solid #e6e6e6;
  color: #93999e; font-size: 12.500px; font-weight: 700;
  line-height: 16px; text-align: center; flex: none;
}
.slider-knob {
  position: absolute; top: 50%;
  width: 26px; height: 28px;
  transform: translate(-50%, -50%);
  border: 2px solid #aaaaaa;
  border-radius: 50%;
  background: conic-gradient(#c9c9c9, #f2f2f2, #c9c9c9, #f2f2f2, #c9c9c9);
  box-shadow: 0 2px 3px rgba(0,0,0,.3);
}
.knob-faded { opacity: .45; }
.all-row {
  display: flex; justify-content: flex-end; align-items: center; gap: 15px;
  margin-top: 5px; height: 22px;
}
.all-label { font-size: 17.500px; font-weight: 700; color: #2c3a44; }

/* cards */
.cards {
  display: grid;
  grid-template-columns: 612px 612px;
  gap: 13px;
  padding: 21px 18px 0 14px;
}
.card {
  height: 116px;
  background: #f6f6f6;
  border-radius: 10px;
  box-shadow: 0 0 1px rgba(0,0,0,.15);
  padding: 7px 11px 0 15px;
}
.card-head { display: flex; align-items: center; height: 22px; }
.card-name { font-size: 18px; font-weight: 700; color: #2c3a44; margin-top: -3px; }
.imp {
  margin-left: auto;
  width: 135px; height: 13px;
  border: 1px solid #d4d4d4; border-radius: 7px;
  background: #fbfbfb;
  padding: 2px;
  display: block;
  flex: none;
}
.imp-fill { display: block; height: 100%; background: #b3d23f; border-radius: 4px; }
.imp-val { width: 71px; padding-left: 6px; font-size: 12.500px; color: #a5a5a5; flex: none; }
.card-body { display: flex; margin-top: 15px; padding-left: 33px; }
.range { width: 378px; flex: none; }
.scale {
  display: flex; justify-content: space-between;
  margin: 0 -14px 0 -13px;
  font-size: 16px; line-height: 20px; color: #949494;
}
.track {
  height: 7px; margin-top: 11px;
  border-radius: 4px; background: #9a9ea3;
  position: relative;
}
.val-box {
  width: 124px; height: 39px;
  margin: 14px 0 0 46px;
  border: 1px solid #d2d2d2;
  background: #fdfdfd;
  color: #3d4a52;
  font-size: 18.500px; font-weight: 700;
  line-height: 37px;
  text-align: right;
  padding-right: 4px;
  flex: none;
}

/* taskbar */
.taskbar {
  height: 58px; flex: none;
  background: #d6d6d6;
  border-top: 1px solid #b4b4b4;
  display: flex; align-items: center;
  font-family: "Noto Sans", sans-serif;
}
.weather { display: flex; align-items: center; width: 530px; padding-left: 24px; color: #222; }
.weather-text { margin-left: 8px; display: flex; flex-direction: column; font-size: 14.300px; line-height: 20px; }
.w-desc { color: #555; }
.search {
  width: 274px; height: 38px; margin-left: 17px;
  border-radius: 19px;
  background: #f1f1f1;
  box-shadow: 0 1px 1px rgba(0,0,0,.2);
  display: flex; align-items: center;
  padding: 0 5px 0 14px;
  flex: none;
}
.search-text { margin-left: 12px; font-size: 16.500px; color: #444; }
.search-art { margin-left: auto; }
.apps { display: flex; margin-left: 2px; height: 100%; }
.app {
  width: 55px; height: 100%;
  display: flex; align-items: center; justify-content: center;
  position: relative;
}
.has-dot::after {
  content: ""; position: absolute; left: 50%; bottom: 2px;
  width: 8px; height: 4px; margin-left: -4px; border-radius: 2px;
  background: #6f6f6f;
}
.chrome {
  width: 30px; height: 30px; border-radius: 50%;
  background: radial-gradient(circle, #2f7ff0 0 26%, #fff 27% 36%, transparent 37%),
    conic-gradient(from -30deg, #e2412f 0 120deg, #fbc02d 120deg 240deg, #2f9e44 240deg);
}
.app-badge {
  position: absolute; left: 28px; top: 7px;
  width: 20px; height: 20px; border-radius: 50%;
  background: #c2185b; color: #f5c1d5;
  font-size: 11px; line-height: 20px; text-align: center;
}
.svg-t { font: 700 12px "Liberation Sans", sans-serif; fill: #fff; text-anchor: middle; }
.svg-z { font: 700 9px "Liberation Sans", sans-serif; fill: #fff; text-anchor: middle; }
.tray {
  margin-left: auto;
  display: flex; align-items: center;
  padding-right: 22px;
  font-size: 14.300px; color: #1a1a1a;
}
.tray-wifi { margin-left: 25px; }
.tray-vol { margin-left: 9px; }
.tray-bat { margin-left: 9px; }
.clock { display: flex; flex-direction: column; align-items: flex-end; width: 88px; line-height: 20px; }
.tray-bell { margin-left: 10px; }
```
